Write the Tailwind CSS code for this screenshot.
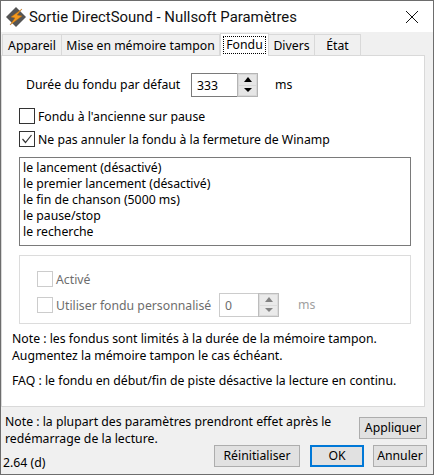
<!DOCTYPE html>
<html lang="fr">
<head>
    <meta charset="UTF-8">
    <title>Sortie DirectSound</title>
    <script src="https://cdn.jsdelivr.net/npm/@tailwindcss/browser@4"></script>
</head>
<body class="bg-white">
    <div class="w-[434px] h-[475px] border border-[#6d6d6d] bg-[#f0f0f0] flex flex-col overflow-hidden text-[12.25px] leading-[16px] text-black font-['Noto_Sans',sans-serif]">
        <!-- title bar -->
        <div class="h-[31px] shrink-0 bg-white flex items-center pl-[3px] pr-[15px]">
            <svg class="w-[24px] h-[24px]" viewBox="0 0 24 24">
                <path d="M12 2 L22 12 L12 22 L2 12 Z" fill="#555" stroke="#aaa"/>
                <path d="M18 4 L7 12 L11 13 L6 20 L18 11 L13 10 Z" fill="#f39a1e" stroke="#b96a10" stroke-width="0.5"/>
            </svg>
            <span class="ml-[1px] text-[14.9px] text-[#111] font-['Roboto',sans-serif]">Sortie DirectSound - Nullsoft Paramètres</span>
            <svg class="ml-auto w-[12px] h-[12px]" viewBox="0 0 12 12"><path d="M0 0 L12 12 M12 0 L0 12" stroke="#111" fill="none"/></svg>
        </div>
        <!-- tabs -->
        <div class="h-[23px] shrink-0 flex items-end pl-[1px]">
            <div class="h-[21px] w-[60px] border border-b-0 border-[#d9d9d9] bg-[#f0f0f0] text-center leading-[21px]">Appareil</div>
            <div class="h-[21px] w-[158px] border border-l-0 border-b-0 border-[#d9d9d9] bg-[#f0f0f0] text-center leading-[21px] whitespace-nowrap">Mise en mémoire tampon</div>
            <div class="h-[23px] w-[49px] border border-b-0 border-[#d9d9d9] bg-white p-[2px] relative top-[1px]">
                <div class="h-[18px] border border-dotted border-black text-center leading-[15px]">Fondu</div>
            </div>
            <div class="h-[21px] w-[46px] border border-l-0 border-b-0 border-[#d9d9d9] bg-[#f0f0f0] text-center leading-[21px]">Divers</div>
            <div class="h-[21px] w-[46px] border border-l-0 border-b-0 border-[#d9d9d9] bg-[#f0f0f0] text-center leading-[21px]">État</div>
        </div>
        <!-- panel -->
        <div class="w-[424px] h-[352px] shrink-0 border border-[#d9d9d9] bg-white pl-[17px] pr-[13px] pt-[17px]">
            <div class="flex items-center h-[24px]">
                <span class="ml-[7px] w-[165px] whitespace-nowrap">Durée du fondu par défaut</span>
                <div class="flex w-[67px] h-[24px] border border-[#7a7a7a] bg-white">
                    <span class="flex-1 pl-[5px] leading-[24px]">333</span>
                    <div class="w-[21px] border border-[#b4b4b4] bg-[#d8d8d8] p-[1px] flex flex-col gap-[1px] -my-[1px] -mr-[1px]">
                        <div class="flex-1 bg-[#e6e6e6] flex items-center justify-center"><div class="border-x-[4px] border-x-transparent border-b-[5px] border-b-black"></div></div>
                        <div class="flex-1 bg-[#e6e6e6] flex items-center justify-center"><div class="border-x-[4px] border-x-transparent border-t-[4px] border-t-black"></div></div>
                    </div>
                </div>
                <span class="ml-[17px]">ms</span>
            </div>
            <div class="flex items-center mt-[11px] h-[16px]">
                <div class="w-[16px] h-[16px] shrink-0 border border-[#333] bg-white"></div>
                <span class="ml-[3px] relative top-[1px]">Fondu à l'ancienne sur pause</span>
            </div>
            <div class="flex items-center mt-[7px] h-[16px]">
                <div class="w-[16px] h-[16px] shrink-0 border border-[#333] bg-white">
                    <svg class="w-[14px] h-[14px]" viewBox="0 0 14 14"><path d="M2.5 7 L5.5 10.5 L11.5 3" stroke="#333" stroke-width="1.2" fill="none"/></svg>
                </div>
                <span class="ml-[3px] relative top-[1px] whitespace-nowrap">Ne pas annuler la fondu à la fermeture de Winamp</span>
            </div>
            <div class="mt-[10px] h-[89px] border border-[#7a7a7a] bg-white pl-[3px] pt-[2px]">
                <div>le lancement (désactivé)</div>
                <div>le premier lancement (désactivé)</div>
                <div>le fin de chanson (5000 ms)</div>
                <div>le pause/stop</div>
                <div>le recherche</div>
            </div>
            <div class="mt-[9px] h-[69px] border border-[#dcdcdc] pl-[17px] pt-[15px] text-[#6d6d6d]">
                <div class="flex items-center h-[16px]">
                    <div class="w-[16px] h-[16px] shrink-0 border border-[#cccccc]"></div>
                    <span class="ml-[3px] relative top-[1px]">Activé</span>
                </div>
                <div class="flex items-center h-[24px] mt-[6px]">
                    <div class="w-[16px] h-[16px] shrink-0 border border-[#cccccc]"></div>
                    <span class="ml-[3px] w-[163px] whitespace-nowrap relative top-[1px]">Utiliser fondu personnalisé</span>
                    <div class="flex w-[60px] h-[24px] border border-[#cccccc] shrink-0">
                        <span class="flex-1 pl-[5px] leading-[24px]">0</span>
                        <div class="w-[21px] border border-[#bdbdbd] bg-[#dcdcdc] p-[1px] flex flex-col gap-[1px] -my-[1px] -mr-[1px]">
                            <div class="flex-1 bg-[#eaeaea] flex items-center justify-center"><div class="border-x-[4px] border-x-transparent border-b-[5px] border-b-[#838383]"></div></div>
                            <div class="flex-1 bg-[#eaeaea] flex items-center justify-center"><div class="border-x-[4px] border-x-transparent border-t-[4px] border-t-[#838383]"></div></div>
                        </div>
                    </div>
                    <span class="ml-[19px] text-[#a0a0a0]">ms</span>
                </div>
            </div>
            <div class="mt-[6px] -ml-[7px] whitespace-nowrap leading-[17px]">
                <div>Note : les fondus sont limités à la durée de la mémoire tampon.</div>
                <div>Augmentez la mémoire tampon le cas échéant.</div>
                <div class="mt-[8px]">FAQ : le fondu en début/fin de piste désactive la lecture en continu.</div>
            </div>
        </div>
        <!-- footer -->
        <div class="flex-1 flex flex-col pr-[6px]">
            <div class="flex justify-between pt-[10px] h-[38px]">
                <div class="pl-[4px] -mt-[4px] w-[345px] leading-[17px]">Note : la plupart des paramètres prendront effet après le redémarrage de la lecture.</div>
                <button class="w-[68px] h-[22px] border border-[#adadad] bg-[#e1e1e1]">Appliquer</button>
            </div>
            <div class="flex items-start h-[30px]">
                <div class="pl-[2px] pt-[10px]">2.64 (d)</div>
                <button class="ml-auto w-[86px] h-[22px] border border-[#adadad] bg-[#e1e1e1]">Réinitialiser</button>
                <button class="ml-[10px] w-[54px] h-[22px] border-2 border-[#0078d7] bg-[#e1e1e1]">OK</button>
                <button class="ml-[9px] w-[54px] h-[22px] border border-[#adadad] bg-[#e1e1e1]">Annuler</button>
            </div>
        </div>
    </div>
</body>
</html>
